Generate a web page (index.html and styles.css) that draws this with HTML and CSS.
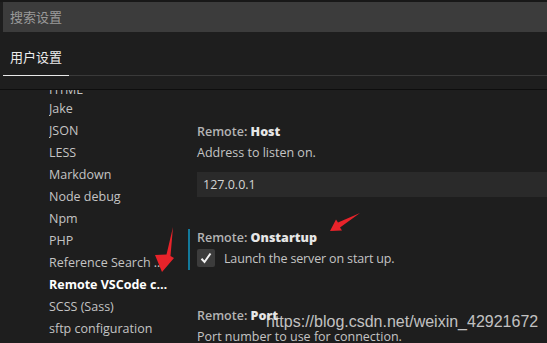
FILE: index.html
```html
<!DOCTYPE html>
<html lang="zh">
<head>
  <meta charset="UTF-8" />
  <title>Settings</title>
  <link rel="stylesheet" href="styles.css">
</head>
<body>
  <div class="header">
    <div class="search">搜索设置</div>
    <div class="tabs">
      <div class="tab active">用户设置</div>
    </div>
  </div>

  <div class="main">
    <ul class="nav">
      <li class="cut">HTML</li>
      <li>Jake</li>
      <li>JSON</li>
      <li>LESS</li>
      <li>Markdown</li>
      <li>Node debug</li>
      <li>Npm</li>
      <li>PHP</li>
      <li>Reference Search View</li>
      <li class="current">Remote VSCode configuration</li>
      <li>SCSS (Sass)</li>
      <li>sftp configuration</li>
    </ul>

    <div class="content">
      <div class="setting">
        <div class="label">Remote: <b>Host</b></div>
        <div class="desc">Address to listen on.</div>
        <div class="field">127.0.0.1</div>
      </div>

      <div class="setting focused">
        <div class="label">Remote: <b>Onstartup</b></div>
        <div class="check-row">
          <span class="checkbox">
            <svg width="12" height="12" viewBox="0 0 12 12"><path d="M1.5 6.8 L4.5 10 L10.5 1.5" fill="none" stroke="#f2f2f2" stroke-width="2"/></svg>
          </span>
          Launch the server on start up.
        </div>
      </div>

      <div class="setting port">
        <div class="label">Remote: <b>Port</b></div>
        <div class="desc">Port number to use for connection.</div>
      </div>
    </div>
  </div>

  <!-- annotation arrows -->
  <svg class="marks" width="547" height="343" viewBox="0 0 547 343">
    <polygon points="173,227 170.5,256 174,258 162,272 155,255 166.5,254.5" fill="#e8232a"/>
    <polygon points="360,213 340,227.5 342,230.5 330,231 336,219.5 338,222.5" fill="#e8232a"/>
  </svg>
  <div class="watermark">https://blog.csdn.net/weixin_42921672</div>
</body>
</html>
```

FILE: styles.css
```css
html, body {
  margin: 0;
  height: 100%;
  overflow: hidden;
}
body {
  font-family: "Open Sans", "Noto Sans CJK SC", sans-serif;
  font-size: 12.5px;
  background: #1e1e1e;
  color: #c4c4c4;
  position: relative;
  border-top: 2px solid #181818;
}
.header {
  margin-left: 3px;
}
.search {
  height: 30px;
  line-height: 30px;
  background: #3c3c3c;
  padding-left: 7px;
  color: #9a9a9a;
  font-size: 13px;
}
.tabs {
  height: 43px;
  display: flex;
  align-items: flex-end;
  border-bottom: 1px solid #3a3a3a;
}
.tab {
  width: 66px;
  text-align: center;
  font-size: 13px;
  color: #ececec;
  padding-bottom: 9px;
  margin-bottom: -1px;
}
.tab.active {
  border-bottom: 1px solid #e8e8e8;
}
.main {
  margin-top: 13px;
  border-top: 1px solid #0e0e0e;
  display: flex;
  height: 260px;
  overflow: hidden;
}
.nav {
  list-style: none;
  margin: 0;
  padding: 0 0 0 49px;
  width: 188px;
  box-sizing: border-box;
  flex-shrink: 0;
}
.nav li {
  line-height: 22px;
  white-space: nowrap;
  overflow: hidden;
  text-overflow: ellipsis;
  padding-right: 18px;
}
.nav li.cut {
  margin-top: -9px;
  line-height: 17px;
}
.nav li.current {
  color: #ffffff;
  font-weight: bold;
}
.content {
  flex: 1;
  padding-top: 33px;
}
.setting {
  border-left: 2px solid transparent;
  padding: 0 0 1px 7px;
}
.setting.focused {
  margin-top: 31px;
  border-left-color: #13799b;
}
.setting.port {
  margin-top: 37px;
}
.label {
  line-height: 18px;
  color: #b4b4b4;
  font-weight: 600;
}
.label b {
  color: #e6e6e6;
}
.desc {
  margin-top: 2px;
  line-height: 20px;
}
.field {
  margin-top: 9px;
  height: 25px;
  line-height: 25px;
  background: #2a2a2a;
  padding-left: 6px;
  color: #d4d4d4;
}
.check-row {
  display: flex;
  align-items: center;
  gap: 9px;
  height: 22px;
  letter-spacing: -0.15px;
}
.checkbox {
  width: 18px;
  height: 18px;
  background: #3c3c3c;
  border-radius: 2px;
  display: flex;
  align-items: center;
  justify-content: center;
}
.marks {
  position: absolute;
  left: 0;
  top: -2px;
  pointer-events: none;
}
.watermark {
  position: absolute;
  left: 266px;
  top: 311px;
  font-family: "Liberation Sans", sans-serif;
  font-size: 16px;
  color: rgba(225, 225, 225, 0.85);
}
```
